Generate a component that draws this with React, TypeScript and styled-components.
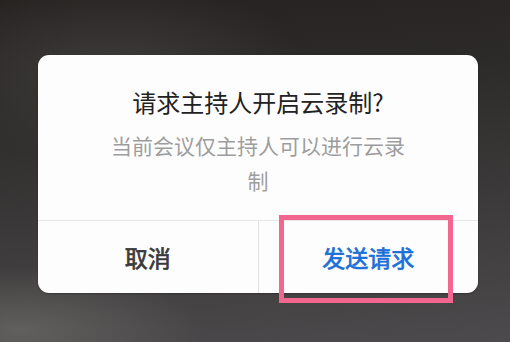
import styled, { createGlobalStyle } from 'styled-components';

const GlobalStyle = createGlobalStyle`
  html, body {
    margin: 0;
    padding: 0;
  }
  body {
    font-family: "Noto Sans CJK SC", "Noto Sans", sans-serif;
  }
`;

const Backdrop = styled.div`
  width: 510px;
  height: 342px;
  box-sizing: border-box;
  padding: 55px 32px 0 38px;
  overflow: hidden;
  background:
    radial-gradient(ellipse 260px 90px at 20px 330px, rgba(120, 118, 114, 0.55), transparent 70%),
    radial-gradient(ellipse 260px 120px at 110px 70px, rgba(80, 78, 74, 0.5), transparent 75%),
    linear-gradient(175deg, #252220 0%, #2c2a29 25%, #3f3d3d 70%, #4c4a4c 100%);
`;

const Dialog = styled.div`
  width: 440px;
  background: #fdfdfd;
  border-radius: 11px;
  box-shadow: 0 1px 2px rgba(0, 0, 0, 0.25);
`;

const Body = styled.div`
  height: 165px;
  box-sizing: border-box;
  padding: 31px 68px 0;
  display: flex;
  flex-direction: column;
  align-items: center;
  text-align: center;
`;

const Title = styled.div`
  font-size: 24px;
  line-height: 32px;
  color: #222;
`;

const Message = styled.div`
  margin-top: 10px;
  font-size: 21px;
  line-height: 35px;
  color: #9d9d9d;
`;

const Actions = styled.div`
  display: flex;
  height: 72px;
  border-top: 1px solid #e6e6e6;
`;

const Action = styled.div<{ $primary?: boolean }>`
  position: relative;
  flex: 1;
  display: flex;
  align-items: center;
  justify-content: center;
  font-size: 23px;
  font-weight: 400;
  -webkit-text-stroke: 0.7px currentColor;
  color: ${(p) => (p.$primary ? '#1a6fd8' : '#3a3a3a')};
  & + & {
    border-left: 1px solid #e2e2e2;
  }
`;

const Highlight = styled.div`
  position: absolute;
  left: 20px;
  top: -6px;
  width: 174px;
  height: 88px;
  box-sizing: border-box;
  border: 5px solid #f2678f;
  pointer-events: none;
`;

export default function App() {
  return (
    <>
      <GlobalStyle />
      <Backdrop>
        <Dialog>
          <Body>
            <Title>请求主持人开启云录制?</Title>
            <Message>当前会议仅主持人可以进行云录制</Message>
          </Body>
          <Actions>
            <Action>取消</Action>
            <Action $primary>
              发送请求
              <Highlight />
            </Action>
          </Actions>
        </Dialog>
      </Backdrop>
    </>
  );
}
